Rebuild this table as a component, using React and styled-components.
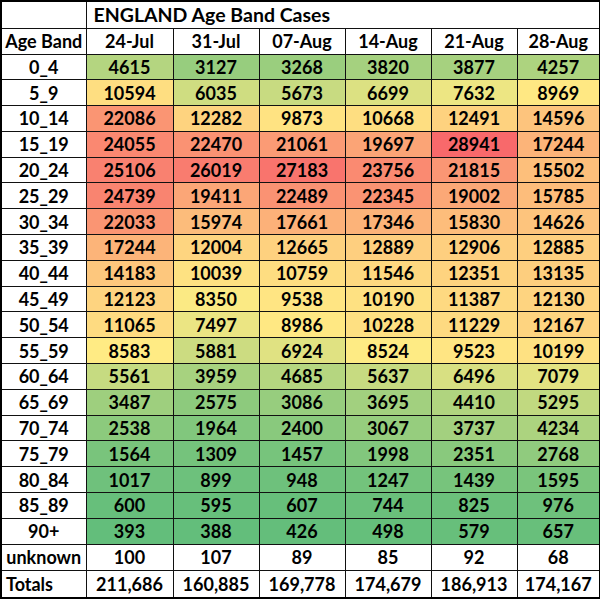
import React from "react";
import styled, { createGlobalStyle } from "styled-components";

const Global = createGlobalStyle`
  html, body { margin: 0; padding: 0; background: #ffffff; }
  body { font-family: Lato, "Open Sans", Arial, sans-serif; }
`;

const dates = ["24-Jul", "31-Jul", "07-Aug", "14-Aug", "21-Aug", "28-Aug"];

const rows = [
  ["0_4", [4615, 3127, 3268, 3820, 3877, 4257]],
  ["5_9", [10594, 6035, 5673, 6699, 7632, 8969]],
  ["10_14", [22086, 12282, 9873, 10668, 12491, 14596]],
  ["15_19", [24055, 22470, 21061, 19697, 28941, 17244]],
  ["20_24", [25106, 26019, 27183, 23756, 21815, 15502]],
  ["25_29", [24739, 19411, 22489, 22345, 19002, 15785]],
  ["30_34", [22033, 15974, 17661, 17346, 15830, 14626]],
  ["35_39", [17244, 12004, 12665, 12889, 12906, 12885]],
  ["40_44", [14183, 10039, 10759, 11546, 12351, 13135]],
  ["45_49", [12123, 8350, 9538, 10190, 11387, 12130]],
  ["50_54", [11065, 7497, 8986, 10228, 11229, 12167]],
  ["55_59", [8583, 5881, 6924, 8524, 9523, 10199]],
  ["60_64", [5561, 3959, 4685, 5637, 6496, 7079]],
  ["65_69", [3487, 2575, 3086, 3695, 4410, 5295]],
  ["70_74", [2538, 1964, 2400, 3067, 3737, 4234]],
  ["75_79", [1564, 1309, 1457, 1998, 2351, 2768]],
  ["80_84", [1017, 899, 948, 1247, 1439, 1595]],
  ["85_89", [600, 595, 607, 744, 825, 976]],
  ["90+", [393, 388, 426, 498, 579, 657]],
];

const unknown = [100, 107, 89, 85, 92, 68];
const totals = ["211,686", "160,885", "169,778", "174,679", "186,913", "174,167"];

const all = rows.flatMap((r) => r[1]).sort((a, b) => a - b);
const minV = all[0];
const maxV = all[all.length - 1];
const pos = (all.length - 1) * 0.5;
const midV = all[Math.floor(pos)] + (all[Math.ceil(pos)] - all[Math.floor(pos)]) * (pos - Math.floor(pos));

const GREEN = [99, 190, 123];
const YELLOW = [255, 235, 132];
const RED = [248, 105, 107];

const mix = (a, b, t) => a.map((v, i) => Math.round(v + (b[i] - v) * t));
const colorFor = (v) => {
  const c =
    v <= midV
      ? mix(GREEN, YELLOW, (v - minV) / (midV - minV))
      : mix(YELLOW, RED, (v - midV) / (maxV - midV));
  return `rgb(${c[0]}, ${c[1]}, ${c[2]})`;
};

const Table = styled.table`
  border-collapse: collapse;
  table-layout: fixed;
  width: 599px;
  border: 2px solid #000;
  color: #000;
  font-weight: 700;
  font-size: 18px;
`;

const Row = styled.tr`
  height: ${(p) => p.$h}px;
`;

const Cell = styled.td`
  border: 1.5px solid #111;
  padding: 0 ${(p) => (p.$align === "left" ? "4px" : "0")};
  text-align: ${(p) => p.$align || "center"};
  vertical-align: middle;
  line-height: 1;
  white-space: nowrap;
  background: #fff;
`;

const TitleCell = styled(Cell)`
  text-align: left;
  padding-left: 7px;
  font-size: 19.5px;
`;

export default function App() {
  return (
    <>
      <Global />
      <Table>
        <colgroup>
          <col style={{ width: 85 }} />
          <col style={{ width: 87 }} />
          <col style={{ width: 86 }} />
          <col style={{ width: 86 }} />
          <col style={{ width: 86 }} />
          <col style={{ width: 86 }} />
          <col style={{ width: 83 }} />
        </colgroup>
        <tbody>
          <Row $h={27}>
            <Cell />
            <TitleCell colSpan={6}>ENGLAND Age Band Cases</TitleCell>
          </Row>
          <Row $h={26}>
            <Cell>Age Band</Cell>
            {dates.map((d) => (
              <Cell key={d}>{d}</Cell>
            ))}
          </Row>
          {rows.map(([label, vals]) => (
            <Row $h={25.8} key={label}>
              <Cell>{label}</Cell>
              {vals.map((v, i) => (
                <Cell key={i} style={{ background: colorFor(v) }}>
                  {v}
                </Cell>
              ))}
            </Row>
          ))}
          <Row $h={26}>
            <Cell>unknown</Cell>
            {unknown.map((v, i) => (
              <Cell key={i}>{v}</Cell>
            ))}
          </Row>
          <Row $h={28}>
            <Cell $align="left">Totals</Cell>
            {totals.map((v, i) => (
              <Cell key={i}>{v}</Cell>
            ))}
          </Row>
        </tbody>
      </Table>
    </>
  );
}
